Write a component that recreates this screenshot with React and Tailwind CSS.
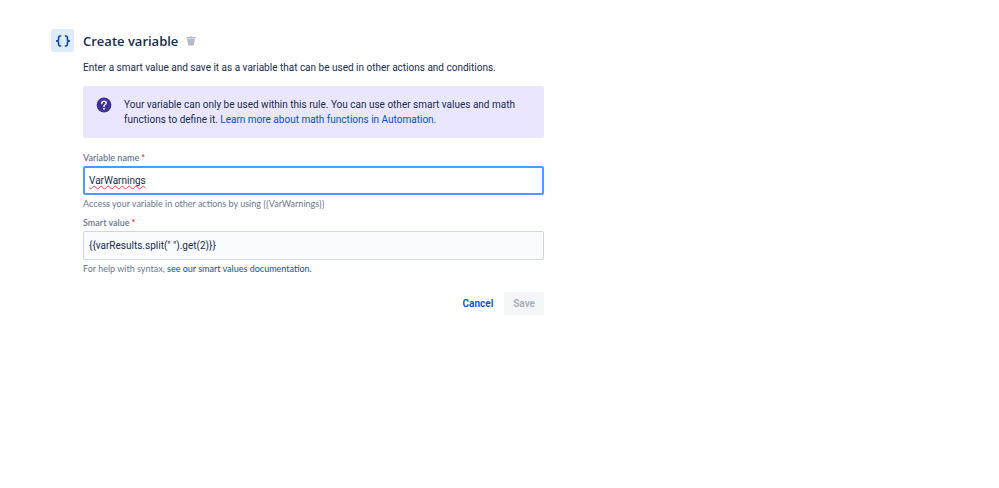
import { useState } from "react"

const linkClass = "text-[#0052cc] hover:underline"
const helpClass = "mt-[3px] font-['Lato',sans-serif] text-[9px] leading-3 text-[#6b778c]"

function BracesIcon() {
  return (
    <svg viewBox="0 0 16 12" className="h-3 w-4" fill="none" stroke="#0747a6" strokeWidth="1.6" aria-hidden="true">
      <path d="M6.2 1H5.2C4.1 1 3.6 1.5 3.6 2.5V4.3C3.6 5.4 2.9 6 1 6C2.9 6 3.6 6.6 3.6 7.7V9.5C3.6 10.5 4.1 11 5.2 11H6.2" />
      <path d="M9.8 1H10.8C11.9 1 12.4 1.5 12.4 2.5V4.3C12.4 5.4 13.1 6 15 6C13.1 6 12.4 6.6 12.4 7.7V9.5C12.4 10.5 11.9 11 10.8 11H9.8" />
    </svg>
  )
}

function TrashIcon() {
  return (
    <svg viewBox="0 0 10 10" className="size-[10px]" fill="#b3bac5" aria-hidden="true">
      <path d="M3.5 0.5H6.5V1H9.6V2.5H0.4V1H3.5Z" />
      <path d="M1.1 3H8.9L7.9 8.8C7.8 9.4 7.5 9.6 7 9.6H3C2.5 9.6 2.2 9.4 2.1 8.8Z" />
    </svg>
  )
}

function QuestionIcon() {
  return (
    <svg viewBox="0 0 16 16" className="size-4 shrink-0" fill="none" aria-hidden="true">
      <circle cx="8" cy="8" r="7.4" fill="#403294" />
      <path
        d="M5.8 6.4C5.8 5 6.7 4.2 8 4.2C9.3 4.2 10.2 5 10.2 6.1C10.2 7.6 8 7.7 8 9.4"
        stroke="#eae6ff"
        strokeWidth="1.6"
        strokeLinecap="round"
      />
      <circle cx="8" cy="11.8" r="1" fill="#eae6ff" />
    </svg>
  )
}

function FieldLabel({ htmlFor, children }) {
  return (
    <label
      htmlFor={htmlFor}
      className="flex gap-0.5 font-['Lato',sans-serif] text-[9px] leading-3 font-semibold text-[#6b778c]"
    >
      {children}
      <span className="text-[#de350b]">*</span>
    </label>
  )
}

export default function App() {
  const [name, setName] = useState("VarWarnings")
  const [value, setValue] = useState('{{varResults.split(" ").get(2)}}')

  return (
    <main className="min-h-screen bg-white pt-[29px] pr-4 pl-[51px] font-['Roboto',sans-serif] text-[10px] leading-[15px] text-[#172b4d]">
      <section className="flex max-w-[493px] gap-[9px]">
        <div className="flex size-[23px] shrink-0 items-center justify-center rounded-[2px] bg-[#deebff]">
          <BracesIcon />
        </div>

        <div className="min-w-0 flex-1">
          <header className="flex h-6 items-center gap-2">
            <h1 className="font-['Open_Sans',sans-serif] text-[13px] leading-6 font-semibold">Create variable</h1>
            <button type="button" aria-label="Delete">
              <TrashIcon />
            </button>
          </header>

          <p className="mt-[7px]">
            Enter a smart value and save it as a variable that can be used in other actions and conditions.
          </p>

          <div className="mt-[11px] flex gap-3 rounded-[2px] bg-[#eae6ff] py-[11px] pr-4 pl-[13px]">
            <QuestionIcon />
            <p>
              Your variable can only be used within this rule. You can use other smart values and math functions to
              define it.{" "}
              <a href="#math-functions" className={linkClass}>
                Learn more about math functions in Automation.
              </a>
            </p>
          </div>

          <form className="mt-[14px]" onSubmit={(e) => e.preventDefault()}>
            <FieldLabel htmlFor="variable-name">Variable name</FieldLabel>
            <textarea
              id="variable-name"
              rows={1}
              required
              spellCheck={false}
              value={name}
              onChange={(e) => setName(e.target.value.replace(/\n/g, ""))}
              className="mt-0.5 block h-[29px] w-full resize-none overflow-hidden rounded-[2px] border-2 border-[#4c9aff] bg-white px-1 py-[5px] underline decoration-[#e5484d] decoration-wavy decoration-1 outline-none [text-decoration-skip-ink:none]"
            />
            <p className={helpClass}>Access your variable in other actions by using {`{{${name}}}`}</p>

            <div className="mt-[7px]">
              <FieldLabel htmlFor="smart-value">Smart value</FieldLabel>
            </div>
            <input
              id="smart-value"
              type="text"
              required
              spellCheck={false}
              value={value}
              onChange={(e) => setValue(e.target.value)}
              className="mt-0.5 block h-[29px] w-full rounded-[2px] border border-[#d3d6de] bg-[#fafbfc] px-[5px] outline-none"
            />
            <p className={helpClass}>
              For help with syntax,{" "}
              <a href="#smart-values" className={linkClass}>
                see our smart values documentation.
              </a>
            </p>

            <div className="mt-[17px] flex justify-end gap-[3px] font-semibold">
              <button type="button" className="h-[23px] px-2 text-[#0052cc]">
                Cancel
              </button>
              <button type="submit" disabled className="h-[23px] rounded-[2px] bg-[#f4f5f7] px-[9px] text-[#a5adba]">
                Save
              </button>
            </div>
          </form>
        </div>
      </section>
    </main>
  )
}
